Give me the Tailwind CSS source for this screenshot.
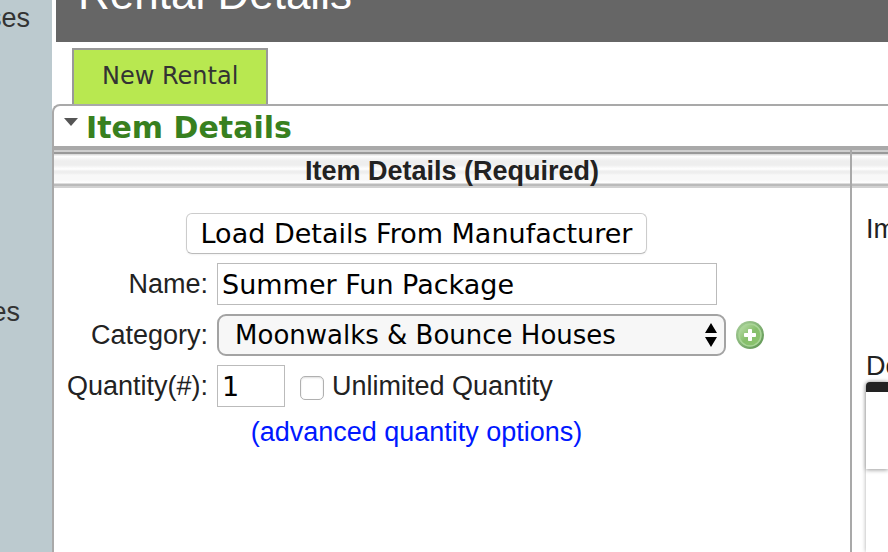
<!DOCTYPE html>
<html lang="en">
<head>
  <meta charset="UTF-8">
  <meta name="viewport" content="width=device-width, initial-scale=1">
  <title>Rental Details</title>
  <script src="https://cdn.jsdelivr.net/npm/@tailwindcss/browser@4"></script>
</head>
<body class="flex min-h-screen overflow-hidden bg-white font-['Liberation_Sans',Arial,sans-serif] text-[27px] leading-8 text-[#222]">

  <nav class="flex w-[52px] shrink-0 flex-col items-end gap-[262px] overflow-hidden bg-[#bccacf] pt-0.5 text-[#333]">
    <a href="#" class="pr-[22px]">ses</a>
    <a href="#" class="pr-8">es</a>
  </nav>

  <main class="flex min-w-0 flex-1 flex-col">
    <header class="ml-1 flex h-[42px] items-end overflow-hidden bg-[#666] pb-[26px] pl-[22px]">
      <h1 class="text-[44px] leading-[44px] text-white">Rental Details</h1>
    </header>

    <div class="mt-1.5 flex pl-5">
      <a href="#" class="flex h-14 items-center border-2 border-b-0 border-[#999] bg-[#b8e850] px-7 pb-0.5 font-['DejaVu_Sans',Verdana,sans-serif] text-[24px] text-[#333]">New Rental</a>
    </div>

    <section class="flex flex-1 flex-col rounded-tl-lg border-t-2 border-l-2 border-[#a9a9a9]">
      <h2 class="flex h-11 items-center gap-2 border-b-4 border-[#a9a9a9] pt-1 pl-2.5 font-['DejaVu_Sans',Verdana,sans-serif] text-[30px] font-bold text-[#38801f]">
        <svg class="mb-3 h-2 w-3.5" viewBox="0 0 14 8"><path d="M0 0h14L7 8z" fill="#555"/></svg>
        Item Details
      </h2>

      <div class="grid flex-1 grid-cols-[1fr_38px]">
        <div>
          <h3 class="h-[38px] bg-[linear-gradient(#cfcfcf_2px,#999_2px_4px,#ddd_4px_5px,#fff_6px,#eee_11px_15px,#fff_19px,#eee_21px_23px,#f8f8f8_25px_30px,#fff_33px,#bbb_34px_36px,#d2d2d2_36px)] text-center leading-[42px] font-bold">Item Details (Required)</h3>

          <form class="grid grid-cols-[auto_1fr] items-center gap-x-[9px] gap-y-[9px] pt-[25px] pr-[84px] pl-[13px]">
            <button type="button" class="col-span-2 h-[41px] justify-self-center rounded-md border border-[#ccc] border-b-[#bbb] bg-white px-3.5 font-['DejaVu_Sans',Verdana,sans-serif] text-[27px] leading-8 text-black shadow-xs">Load Details From Manufacturer</button>

            <label for="name" class="text-right">Name:</label>
            <input id="name" type="text" value="Summer Fun Package" class="h-[42px] w-[500px] border border-[#bbb] px-1 font-['DejaVu_Sans',Verdana,sans-serif] text-[27px] text-black">

            <label for="category" class="text-right">Category:</label>
            <div class="flex items-center gap-2.5">
              <div class="relative w-[509px]">
                <select id="category" class="h-[42px] w-full appearance-none rounded-[9px] border-2 border-[#a3a3a3] bg-[#f7f7f7] px-4 font-['DejaVu_Sans',Verdana,sans-serif] text-[26px] leading-8 text-black">
                  <option>Moonwalks &amp; Bounce Houses</option>
                </select>
                <svg class="pointer-events-none absolute top-[9px] right-[9px] h-6 w-3" viewBox="0 0 12 24"><path d="M6 0l6 10H0zM0 14h12L6 24z"/></svg>
              </div>
              <button type="button" aria-label="Add category" class="size-7">
                <svg class="size-7" viewBox="0 0 28 28">
                  <defs>
                    <linearGradient id="rim" x1="0" y1="0" x2="1" y2="1"><stop offset="0" stop-color="#a9cf9a"/><stop offset="1" stop-color="#5c9450"/></linearGradient>
                    <linearGradient id="face" x1="0" y1="0" x2="1" y2="1"><stop offset="0" stop-color="#c0dfb0"/><stop offset=".5" stop-color="#86be6c"/><stop offset="1" stop-color="#8cc56e"/></linearGradient>
                  </defs>
                  <circle cx="14" cy="14" r="14" fill="url(#rim)"/>
                  <circle cx="14" cy="14" r="11" fill="url(#face)" stroke="#a9d597" stroke-width="1.5"/>
                  <path d="M12.5 8.5h3v4h4v3h-4v4h-3v-4h-4v-3h4z" fill="#fff" stroke="#fff" stroke-linejoin="round"/>
                </svg>
              </button>
            </div>

            <label for="quantity" class="text-right">Quantity(#):</label>
            <div class="flex items-center">
              <input id="quantity" type="text" value="1" class="h-[42px] w-[68px] border border-[#bbb] px-1 font-['DejaVu_Sans',Verdana,sans-serif] text-[27px] text-black">
              <input id="unlimited" type="checkbox" class="mt-1 ml-[15px] size-6 appearance-none rounded-[5px] border border-[#b0b0b0] bg-white shadow-[inset_0_1px_2px_#ddd]">
              <label for="unlimited" class="ml-2">Unlimited Quantity</label>
            </div>

            <a href="#" class="col-span-2 justify-self-center text-[#0018ff]">(advanced quantity options)</a>
          </form>
        </div>

        <aside class="flex flex-col overflow-hidden border-l-2 border-[#a9a9a9]">
          <div class="h-[38px] shrink-0 bg-[linear-gradient(#cfcfcf_2px,#999_2px_4px,#ddd_4px_5px,#fff_6px,#eee_11px_15px,#fff_19px,#eee_21px_23px,#f8f8f8_25px_30px,#fff_33px,#bbb_34px_36px,#d2d2d2_36px)]"></div>
          <p class="mt-[25px] pl-3.5">Im</p>
          <p class="mt-[105px] pl-3.5">De</p>
          <div class="ml-3.5 flex flex-1 flex-col rounded-tl shadow-[0_0_4px_#aaa]">
            <div class="relative z-10 h-[87px] rounded-tl border-t-10 border-[#222] bg-white shadow-[0_1px_4px_#999]"></div>
            <div class="flex-1 bg-white"></div>
          </div>
        </aside>
      </div>
    </section>
  </main>

</body>
</html>
